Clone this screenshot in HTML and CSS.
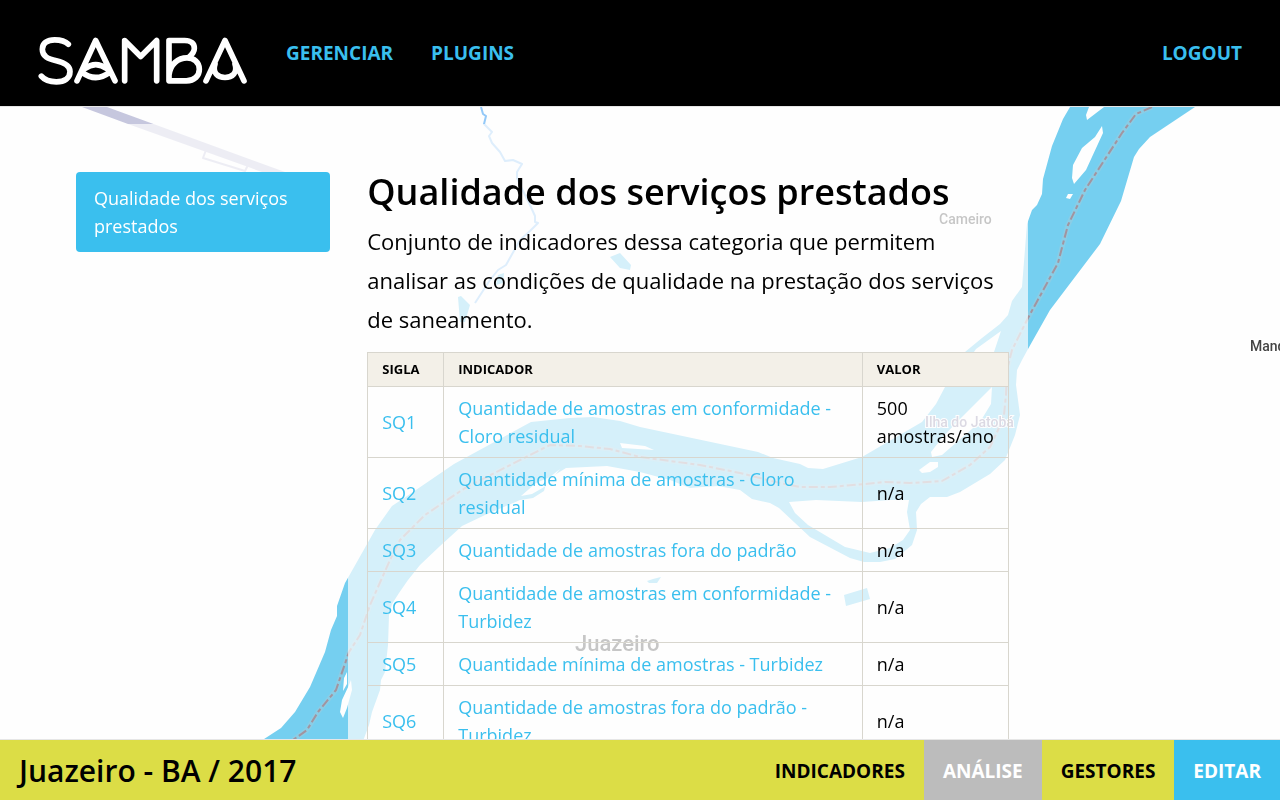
FILE: index.html
```html
<!DOCTYPE html>
<html lang="pt-BR">
<head>
<meta charset="utf-8">
<meta name="viewport" content="width=device-width, initial-scale=1">
<title>SAMBA - Qualidade dos serviços prestados</title>
<link rel="stylesheet" href="styles.css">
</head>
<body>
<svg class="map" viewBox="0 0 1280 800" preserveAspectRatio="xMidYMid slice" aria-hidden="true">
  <path class="runway" d="M82 107H107L285 172H262L128 124Z"/>
  <path class="runway-line" d="M206 150L203 158L245 171L248 165"/>
  <path class="stream" d="M481 107L483 114L486 116L484 124L492 132L489 136L492 143L500 152L505 161L513 160L522 164L517 172L517 178L521 187L530 205L535 216L535 222L538 223L530 231L520 240L506 265L498 270L490 280L475 303"/>
  <path class="water" d="M1070 107L1063 119L1052 146L1043 179L1042 194L1037 205L1032 210L1027 224L1022 287L1012 301L1008 315L1000 324L982 338L965 352L945 387L936 404L922 422L862 457L823 469L808 468L800 464L773 458L758 452L640 427L620 421L593 417L570 418L531 422L498 440L454 464L413 492L392 506L375 530L349 576L345 583L337 606V616L331 630L325 652L310 687L295 712L281 728L261 741H363L369 725L372 712L380 690L381 680L385 672L388 645L389 615L392 604L399 593L408 580L420 565L440 546L462 526L485 515L520 500L533 498L544 491L546 484L553 476L566 468L607 466L640 472L670 480L690 488L702 487L718 486L740 490L752 499L770 503L779 508L810 537L850 558L864 562H880L895 559L912 545L917 530L916 512L921 504L930 497H947L960 492L990 474L1005 460L1015 435L1020 415L1016 385L1017 370L1022 360L1028 349L1050 310L1100 244L1121 201L1134 157L1139 149L1150 137L1195 107Z"/>
  <path class="land" d="M1089 107H1104L1087 120L1086 115ZM1102 126L1103 133L1086 170L1074 184L1072 178L1073 165L1082 148L1095 137ZM1066 198L1068 194L1073 194L1070 199ZM1001 331L994 352L990 362H967L976 349ZM992 387L991 404L980 422L942 455L932 457L931 452L942 438L955 424ZM919 470L930 462L938 462L938 467L930 472L922 473ZM789 502L816 500L862 502L890 500H909L907 512L910 530L903 540L890 548L870 553L845 547L808 525L795 513ZM620 443L645 446L654 450L622 448ZM521 496L536 483L550 477L560 469L546 486L532 494ZM344 678L347 672V684L343 691ZM351 680L352 690L347 708L343 718L340 712L342 700L349 685Z"/>
  <path class="water" d="M610 257L620 253L631 265L630 270L620 268ZM498 275L504 273L503 283L496 285ZM458 297L461 296L470 305L465 322H460ZM844 595L867 588L870 599L846 606ZM647 581L653 579L661 577L657 583L649 583Z"/>
  <path class="border-glow" d="M1152 107L1136 114L1122 133L1085 190L1068 225L1064 240L1058 263L1028 318L1012 350L1007 370L1006 395L1004 415L998 430L990 447L970 465L942 481L910 483L885 482L865 484L830 487L800 487L780 483L740 473L700 465L640 457L610 449L580 446L550 445L530 455L465 488L425 515L400 540L390 560L370 605L360 635L349 652L336 690L318 712L307 730L293 740"/>
  <path class="border-line" d="M1152 107L1136 114L1122 133L1085 190L1068 225L1064 240L1058 263L1028 318L1012 350L1007 370L1006 395L1004 415L998 430L990 447L970 465L942 481L910 483L885 482L865 484L830 487L800 487L780 483L740 473L700 465L640 457L610 449L580 446L550 445L530 455L465 488L425 515L400 540L390 560L370 605L360 635L349 652L336 690L318 712L307 730L293 740"/>
  <g class="place">
    <text x="939" y="224">Cameiro</text>
    <text class="place-island" x="925" y="427">Ilha do Jatobá</text>
    <text x="1250" y="351">Mandacaru</text>
    <text class="place-city" x="575" y="651">Juazeiro</text>
  </g>
</svg>

<header class="header">
  <a class="logo" href="#" aria-label="SAMBA">
    <svg class="logo-mark" viewBox="25 35 630 147" aria-hidden="true">
      <path d="M116 58C105 47 90 45 75 45C52 45 38 56 38 73C38 95 55 102 80 108C105 114 121 122 121 140C121 160 105 171 80 171C60 171 45 166 35 154"/>
      <path d="M142 168L198 47L256 168M165 132Q198 107 232 132M157 142Q198 174 240 142"/>
      <path d="M285 168V47L333 95L381 47V168"/>
      <path d="M418 168V47H465C485 47 494 57 494 70C494 81 488 88 479 96M418 168H470C495 168 509 152 509 133C509 112 492 99 472 99C445 99 422 118 418 150"/>
      <path d="M529 168L586 47L643 168M556 118C547 144 565 158 586 158C607 158 625 144 616 118"/>
    </svg>
  </a>
  <nav class="header-nav">
    <a href="#">Gerenciar</a>
    <a href="#">Plugins</a>
  </nav>
  <a class="logout" href="#">Logout</a>
</header>

<main class="main">
  <div class="columns">
    <nav class="sidebar">
      <a class="sidebar-link" href="#">Qualidade dos serviços prestados</a>
    </nav>
    <section class="content">
      <h1>Qualidade dos serviços prestados</h1>
      <p class="intro">Conjunto de indicadores dessa categoria que permitem analisar as condições de qualidade na prestação dos serviços de saneamento.</p>
      <table class="indicators">
        <thead>
          <tr><th class="col-code" scope="col">Sigla</th><th scope="col">Indicador</th><th class="col-value" scope="col">Valor</th></tr>
        </thead>
        <tbody>
          <tr><td><a href="#">SQ1</a></td><td><a href="#">Quantidade de amostras em conformidade - Cloro residual</a></td><td>500 amostras/ano</td></tr>
          <tr><td><a href="#">SQ2</a></td><td><a href="#">Quantidade mínima de amostras - Cloro residual</a></td><td>n/a</td></tr>
          <tr><td><a href="#">SQ3</a></td><td><a href="#">Quantidade de amostras fora do padrão</a></td><td>n/a</td></tr>
          <tr><td><a href="#">SQ4</a></td><td><a href="#">Quantidade de amostras em conformidade - Turbidez</a></td><td>n/a</td></tr>
          <tr><td><a href="#">SQ5</a></td><td><a href="#">Quantidade mínima de amostras - Turbidez</a></td><td>n/a</td></tr>
          <tr><td><a href="#">SQ6</a></td><td><a href="#">Quantidade de amostras fora do padrão - Turbidez</a></td><td>n/a</td></tr>
        </tbody>
      </table>
    </section>
  </div>
</main>

<footer class="footer">
  <h2>Juazeiro - BA / 2017</h2>
  <nav class="footer-nav">
    <a href="#">Indicadores</a>
    <a class="is-active" href="#" aria-current="page">Análise</a>
    <a href="#">Gestores</a>
    <a class="is-edit" href="#">Editar</a>
  </nav>
</footer>
</body>
</html>
```

FILE: styles.css
```css
* {
  box-sizing: border-box;
}

body {
  margin: 0;
  height: 100vh;
  display: flex;
  flex-direction: column;
  background: #fefefe;
  color: #000;
  font-family: "Open Sans", "Noto Sans", sans-serif;
  font-size: 18px;
  line-height: 28px;
}

a {
  color: #3abfee;
  text-decoration: none;
}

/* Map backdrop */
.map {
  position: fixed;
  inset: 0;
  z-index: -1;
  width: 100%;
  height: 100%;
}

.water {
  fill: #75cff0;
}

.land {
  fill: #fefefe;
}

.runway {
  fill: #c6c7de;
}

.runway-line,
.stream,
.border-glow,
.border-line {
  fill: none;
  stroke-linejoin: round;
}

.runway-line {
  stroke: #c6c7de;
  stroke-width: 2;
}

.stream {
  stroke: #94c9f8;
  stroke-width: 2;
}

.border-glow {
  stroke: #8acde6;
  stroke-width: 5;
}

.border-line {
  stroke: #a2949f;
  stroke-width: 2;
  stroke-dasharray: 9 3 4 3;
}

.place {
  fill: #444;
  stroke: #fff;
  stroke-width: 2;
  paint-order: stroke;
  font-family: Roboto, sans-serif;
  font-size: 14px;
  font-weight: 500;
}

.place-island {
  fill: #8b84a6;
}

.place-city {
  font-size: 22px;
}

/* Header */
.header {
  flex: none;
  display: flex;
  align-items: center;
  gap: 38px;
  padding: 28px 38px;
  background: #000;
  border-bottom: 1px solid #e6e6e6;
  font-size: 19px;
  font-weight: 700;
  text-transform: uppercase;
}

.logo-mark {
  display: block;
  width: 210px;
  height: 50px;
  margin-top: 8px;
  margin-bottom: -8px;
  fill: none;
  stroke: #fff;
  stroke-width: 17;
  stroke-linecap: round;
  stroke-linejoin: round;
}

.header-nav {
  display: flex;
  gap: 38px;
}

.logout {
  margin-left: auto;
}

/* Page body */
.main {
  flex: 1;
  min-height: 0;
  overflow-y: auto;
  scrollbar-width: none;
  padding: 17px 58px 0 57px;
}

.columns {
  display: grid;
  grid-template-columns: 3fr 7fr 2fr;
  align-items: start;
}

.sidebar,
.content {
  background: rgba(254, 254, 254, 0.7);
}

.sidebar {
  padding: 48px 18px 19px 19px;
}

.content {
  padding: 48px 19px 19px;
}

.sidebar-link {
  display: block;
  padding: 12px 18px;
  border-radius: 4px;
  background: #3abfee;
  color: #fff;
}

h1 {
  margin: 0;
  font-size: 36px;
  font-weight: 600;
  line-height: 40px;
}

.intro {
  margin: 10px 0 13px;
  font-size: 22px;
  line-height: 39px;
}

.indicators {
  width: 100%;
  table-layout: fixed;
  border-collapse: collapse;
}

.col-code {
  width: 76px;
}

.col-value {
  width: 146px;
}

.indicators th,
.indicators td {
  padding: 7px 14px;
  border: 1px solid #d8d6ce;
  text-align: left;
  vertical-align: middle;
}

.indicators th {
  background: #f3f0e8;
  font-size: 13px;
  font-weight: 700;
  line-height: 19px;
  text-transform: uppercase;
}

/* Footer */
.footer {
  flex: none;
  display: flex;
  justify-content: space-between;
  border-top: 1px solid #e6e6e6;
  background: #dcdd46;
}

h2 {
  margin: 0;
  padding-top: 2px;
  padding-left: 19px;
  font-size: 30px;
  font-weight: 600;
  line-height: 58px;
}

.footer-nav {
  display: flex;
  font-size: 19px;
  font-weight: 700;
  text-transform: uppercase;
}

.footer-nav a {
  padding: 2px 19px 0;
  color: #000;
  line-height: 58px;
}

.footer-nav .is-active {
  background: #bcbcbc;
  color: #fff;
}

.footer-nav .is-edit {
  background: #3abfee;
  color: #fff;
}
```
